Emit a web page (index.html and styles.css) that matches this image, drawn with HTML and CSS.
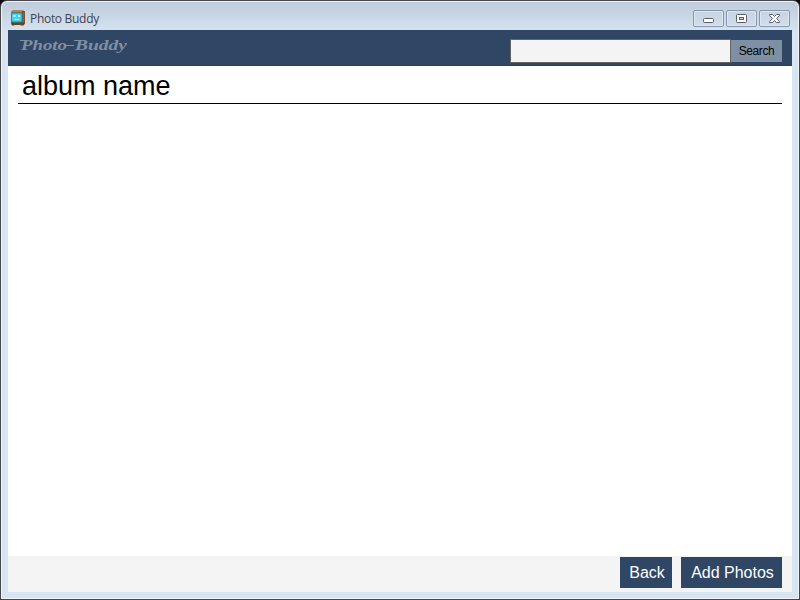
FILE: index.html
```html
<!DOCTYPE html>
<html lang="en">
<head>
<meta charset="utf-8">
<title>Photo Buddy</title>
<link rel="stylesheet" href="styles.css">
</head>
<body>
<div class="window">
  <div class="titlebar">
    <svg class="app-icon" width="16" height="16" viewBox="0 0 16 16">
      <path d="M1.500 1 3 .5H13l2 1v12l-1.500 2H11l-1-.5H5l-1 .5H2l-1-2z" fill="#71401f"/>
      <path d="M1.500 1 3 .5H13L12 2.500H1z" fill="#c0804c"/>
      <path d="M12.500 2.500 14.500 1.500V12l-2 1z" fill="#995d31"/>
      <rect x="1" y="2.500" width="11.500" height="10" rx="1.500" fill="#188daa"/>
      <rect x="2" y="3.500" width="9.500" height="8" rx="1" fill="#4bd2ea"/>
      <path d="M3.500 5h2v2h-2zM8 5h2v2H8zM5 9h4v1H5z" fill="#b9f6fb"/>
    </svg>
    <span class="title">Photo Buddy</span>
    <div class="controls">
      <div class="control"><svg width="29" height="15"><rect x="9.5" y="7.5" width="10" height="4" rx="1" fill="#fff" stroke="#5c5e6f"/></svg></div>
      <div class="control"><svg width="29" height="15"><rect x="9.5" y="3.5" width="10" height="8" rx="1" fill="#fff" stroke="#5c5e6f"/><rect x="12.5" y="6.5" width="4" height="2" fill="#c8d5e4" stroke="#5c5e6f"/></svg></div>
      <div class="control"><svg width="29" height="15"><path d="M9.500 3.500h3l2 2 2-2h3v1L16.500 7.500l3 3v1h-3l-2-2-2 2h-3v-1l3-3-3-3z" fill="#fff" stroke="#5c5e6f" stroke-linejoin="round"/></svg></div>
    </div>
  </div>
  <main class="client">
    <header class="header">
      <svg class="logo" width="110" height="24"><text x="1" y="14" textLength="46" lengthAdjust="spacingAndGlyphs">Photo</text><text x="55" y="14" textLength="52" lengthAdjust="spacingAndGlyphs">Buddy</text><path d="M46 9.500h8M0 4.500h5M54 4.500h5" stroke="#8090a2"/></svg>
      <div class="search"><input class="search-input" type="text" aria-label="Search"><button class="search-button">Search</button></div>
    </header>
    <section class="album"><h1 class="album-name">album name</h1></section>
    <footer class="footer"><button class="action back">Back</button><button class="action add">Add Photos</button></footer>
  </main>
</div>
</body>
</html>
```
FILE: styles.css
```css
* { box-sizing: border-box; }
body { margin: 0; background: #100d10; overflow: hidden; }
.window {
  width: 800px; height: 600px; padding: 0 7px 7px;
  display: flex; flex-direction: column;
  border: 1px solid #47464b; border-radius: 7px 7px 0 0;
  box-shadow: inset 0 0 0 1px #eef4fa;
  background: linear-gradient(#bdcbdb 0, #d7e4f1 32px);
}
.titlebar { height: 29px; flex: none; display: flex; align-items: flex-start; padding: 0 2px; }
.app-icon { margin-top: 9px; }
.title { margin: 9px 0 0 4px; font: 12px/17px "Open Sans", sans-serif; letter-spacing: -.3px; color: #3d4350; }
.controls { margin: 9px 0 0 auto; display: flex; gap: 2px; }
.control {
  width: 31px; height: 17px; border: 1px solid #8795ae; border-radius: 2px;
  background: linear-gradient(#c7d3e2, #d0ddeb); box-shadow: inset 0 0 0 1px #dce7f2;
}
.control svg { display: block; }
.client { flex: 1; display: flex; flex-direction: column; background: #fff; }
.header {
  height: 36px; flex: none; display: flex; justify-content: space-between; align-items: flex-start;
  padding: 0 10px 0 12px; background: #304665; border-bottom: 1px solid #2a3f5c;
}
.logo { margin-top: 6px; overflow: visible; }
.logo text { font: italic bold 15px "Liberation Serif", serif; fill: #8090a2; }
.search { display: flex; margin-top: 9px; }
.search-input { width: 221px; height: 24px; margin: 0; padding: 2px 4px; border: 1px solid #646464; border-radius: 0; background: #f4f4f4; outline: 0; }
.search-button { width: 51px; height: 22px; margin: 1px 0 0; padding: 0; border: 0; background: #8090a4; color: #000; font: 12px/22px "Liberation Sans", sans-serif; letter-spacing: -.4px; }
.album { flex: 1; padding: 0 10px; }
.album-name { height: 38px; margin: 0; padding: 4px 4px 0; border-bottom: 1px solid #000; color: #000; font: 27px/32px "Liberation Sans", sans-serif; }
.footer { height: 36px; display: flex; justify-content: flex-end; gap: 9px; padding: 1px 10px 0; background: #f4f4f4; }
.action { height: 31px; margin: 0; padding: 0; border: 0; background: #304665; color: #fff; font: 16px/31px "Liberation Sans", sans-serif; }
.back { width: 52px; padding-left: 2px; }
.add { width: 101px; padding-left: 2px; }
```
